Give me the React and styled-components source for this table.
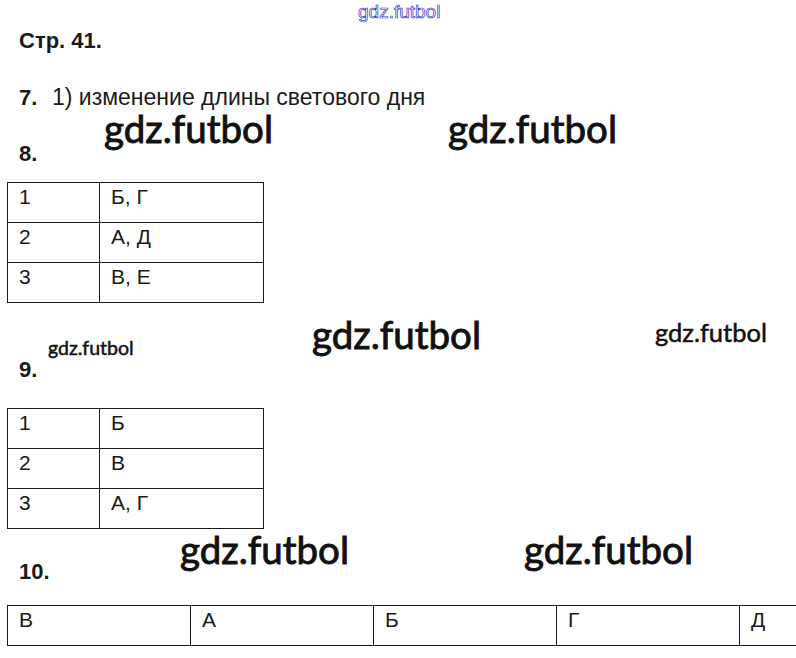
import React from 'react'
import styled, { createGlobalStyle } from 'styled-components'

const GlobalStyle = createGlobalStyle`
  html, body {
    margin: 0;
    padding: 0;
    background: #fff;
  }
  body {
    font-family: "Liberation Sans", Arial, sans-serif;
    color: #1a1a1a;
  }
`;

const Page = styled.div`
  position: relative;
  width: 796px;
  height: 658px;
  overflow: hidden;
  background: #fff;
  padding-top: 29px;
  box-sizing: border-box;
`;

const Heading = styled.div`
  padding-left: 19px;
  font-size: 22px;
  font-weight: bold;
  line-height: 24px;
  margin-top: ${p => p.$top || 0}px;
`;

const TaskLine = styled.div`
  display: flex;
  align-items: baseline;
  padding-left: 19px;
  margin-top: ${p => p.$top || 0}px;
  line-height: 24px;
`;

const Num = styled.span`
  font-size: 22px;
  font-weight: bold;
  width: 33px;
`;

const Answer = styled.span`
  font-size: 23px;
`;

const Table = styled.table`
  border-collapse: collapse;
  margin-left: 7px;
  margin-top: ${p => p.$top || 0}px;
  width: ${p => p.$width}px;
  table-layout: fixed;
  font-size: 21px;
`;

const Cell = styled.td`
  border: 1px solid #1a1a1a;
  height: 40px;
  padding: 2px 0 0 11px;
  vertical-align: top;
  line-height: 23px;
  box-sizing: border-box;
  width: ${p => p.$width}px;
`;

const OpenRow = styled.tr`
  td:last-child {
    border-right: none;
  }
`;

const Watermark = styled.div`
  position: absolute;
  left: ${p => p.$x}px;
  top: ${p => p.$y}px;
  font-family: Lato, "Open Sans", sans-serif;
  font-size: ${p => p.$size}px;
  color: #111;
  -webkit-text-stroke: ${p => (p.$size > 30 ? 0.9 : 0.5)}px #111;
  white-space: nowrap;
  line-height: 0.8;
  pointer-events: none;
`;

const OutlineMark = styled.div`
  position: absolute;
  left: 358px;
  top: 2px;
  font-family: "Liberation Sans", Arial, sans-serif;
  font-size: 19px;
  color: #fff;
  -webkit-text-stroke: 0.7px #2f2fc8;
  line-height: 1;
`;

const table8 = [['1', 'Б, Г'], ['2', 'А, Д'], ['3', 'В, Е']];
const table9 = [['1', 'Б'], ['2', 'В'], ['3', 'А, Г']];
const table10 = ['В', 'А', 'Б', 'Г', 'Д'];

const marks = [
  { x: 104, y: 113, size: 38.5 },
  { x: 448, y: 113, size: 38.5 },
  { x: 48, y: 340, size: 19.5 },
  { x: 312, y: 319, size: 38.5 },
  { x: 655, y: 322, size: 25.5 },
  { x: 180, y: 534, size: 38.5 },
  { x: 524, y: 534, size: 38.5 },
];

const App = () => {
  return (
    <Page>
      <GlobalStyle />
      <Heading>Стр. 41.</Heading>

      <TaskLine $top={32}>
        <Num>7.</Num>
        <Answer>1) изменение длины светового дня</Answer>
      </TaskLine>

      <Heading $top={32}>8.</Heading>
      <Table $top={16} $width={257}>
        <tbody>
          {table8.map(([n, a]) => (
            <tr key={n}>
              <Cell $width={92}>{n}</Cell>
              <Cell>{a}</Cell>
            </tr>
          ))}
        </tbody>
      </Table>

      <Heading $top={55}>9.</Heading>
      <Table $top={26} $width={257}>
        <tbody>
          {table9.map(([n, a]) => (
            <tr key={n}>
              <Cell $width={92}>{n}</Cell>
              <Cell>{a}</Cell>
            </tr>
          ))}
        </tbody>
      </Table>

      <Heading $top={31}>10.</Heading>
      <Table $top={21} $width={915}>
        <tbody>
          <OpenRow>
            {table10.map(l => (
              <Cell key={l} $width={183}>{l}</Cell>
            ))}
          </OpenRow>
        </tbody>
      </Table>

      <OutlineMark>gdz.futbol</OutlineMark>
      {marks.map((m, i) => (
        <Watermark key={i} $x={m.x} $y={m.y} $size={m.size}>gdz.futbol</Watermark>
      ))}
    </Page>
  )
}

export default App
